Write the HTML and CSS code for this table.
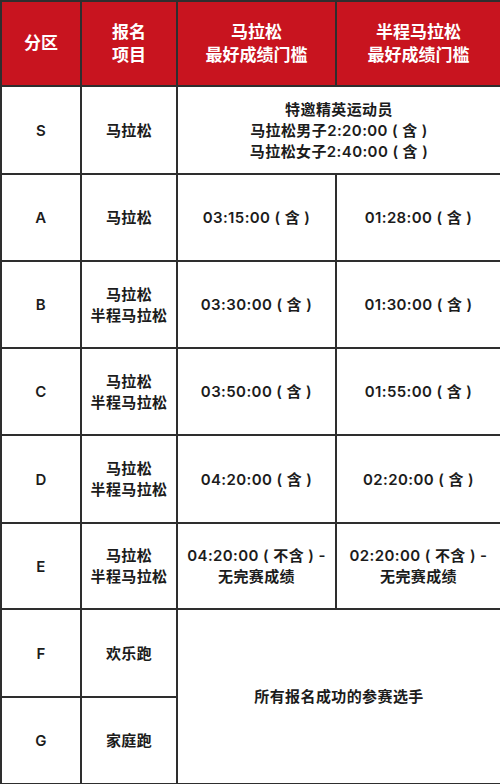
FILE: index.html
```html
<!DOCTYPE html>
<html lang="zh-CN">
<head>
<meta charset="utf-8">
<title>分区表</title>
<link rel="stylesheet" href="styles.css">
</head>
<body>
<table class="grid">
  <colgroup>
    <col class="c1"><col class="c2"><col class="c3"><col class="c4">
  </colgroup>
  <thead>
    <tr class="head">
      <th>分区</th>
      <th>报名<br>项目</th>
      <th>马拉松<br>最好成绩门槛</th>
      <th>半程马拉松<br>最好成绩门槛</th>
    </tr>
  </thead>
  <tbody>
    <tr class="r88">
      <td>S</td>
      <td>马拉松</td>
      <td colspan="2">特邀精英运动员<br>马拉松男子2:20:00 ( 含 )<br>马拉松女子2:40:00 ( 含 )</td>
    </tr>
    <tr class="r87">
      <td>A</td>
      <td>马拉松</td>
      <td>03:15:00 ( 含 )</td>
      <td>01:28:00 ( 含 )</td>
    </tr>
    <tr class="r87">
      <td>B</td>
      <td>马拉松<br>半程马拉松</td>
      <td>03:30:00 ( 含 )</td>
      <td>01:30:00 ( 含 )</td>
    </tr>
    <tr class="r87">
      <td>C</td>
      <td>马拉松<br>半程马拉松</td>
      <td>03:50:00 ( 含 )</td>
      <td>01:55:00 ( 含 )</td>
    </tr>
    <tr class="r88">
      <td>D</td>
      <td>马拉松<br>半程马拉松</td>
      <td>04:20:00 ( 含 )</td>
      <td>02:20:00 ( 含 )</td>
    </tr>
    <tr class="r86">
      <td>E</td>
      <td>马拉松<br>半程马拉松</td>
      <td>04:20:00 ( 不含 ) -<br>无完赛成绩</td>
      <td>02:20:00 ( 不含 ) -<br>无完赛成绩</td>
    </tr>
    <tr class="r88">
      <td>F</td>
      <td>欢乐跑</td>
      <td colspan="2" rowspan="2">所有报名成功的参赛选手</td>
    </tr>
    <tr class="r87">
      <td>G</td>
      <td>家庭跑</td>
    </tr>
  </tbody>
</table>
</body>
</html>
```

FILE: styles.css
```css
html, body {
  margin: 0;
  padding: 0;
  background: #ffffff;
}

.grid {
  width: 500px;
  border-collapse: collapse;
  table-layout: fixed;
  font-family: Inter, "Noto Sans CJK SC", sans-serif;
  color: #1c1c1c;
}

.c1 { width: 80px; }
.c2 { width: 96px; }
.c3 { width: 159px; }
.c4 { width: 165px; }

.grid th,
.grid td {
  border: 2px solid #2e2e2e;
  text-align: center;
  vertical-align: middle;
  padding: 0;
  white-space: nowrap;
}

.grid th {
  background: #c8141f;
  color: #ffffff;
  font-size: 17px;
  font-weight: 700;
  line-height: 23px;
}

.grid td {
  font-size: 15px;
  font-weight: 600;
  line-height: 21px;
  letter-spacing: 0.4px;
}

.head { height: 85px; }
.r86 { height: 86px; }
.r87 { height: 87px; }
.r88 { height: 88px; }
```
